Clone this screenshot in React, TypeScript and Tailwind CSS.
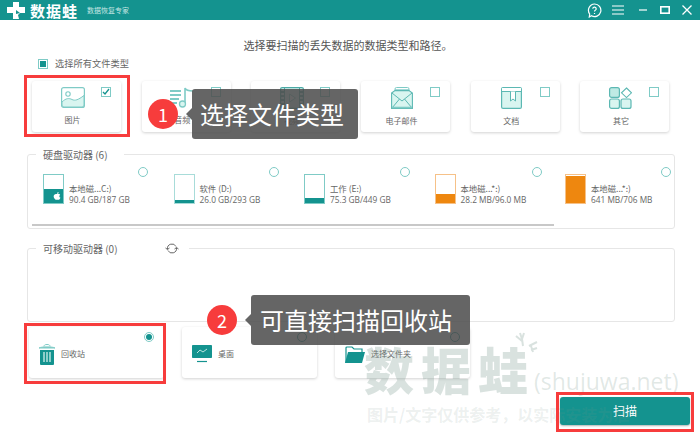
import React from "react";

const T = "#14938f";
const L = "#7fcbc6";
const F = "#d9f5f0";
const cjk = { fontFamily: '"Noto Sans CJK SC", sans-serif' };

function ImageIcon() {
  return (
    <svg width="24" height="21" viewBox="0 0 24 21" fill="none">
      <rect x="0.6" y="0.6" width="22.8" height="19.8" rx="2" fill="#fff" stroke={L} strokeWidth="1.2" />
      <path d="M1 15c4-4 7-4 10-2.5s6 .5 12-4V18a2 2 0 0 1-2 2H3a2 2 0 0 1-2-2z" fill={F} stroke={L} strokeWidth="1" />
      <circle cx="7" cy="7" r="2.2" stroke={L} strokeWidth="1.1" />
    </svg>
  );
}
function AudioIcon() {
  return (
    <svg width="24" height="21" viewBox="0 0 24 21" fill="none">
      <path d="M0 4h11M0 8h11M0 12h9M0 16h7" stroke={L} strokeWidth="1.8" />
      <path d="M15 17V1c1 3 5 3 8 3" stroke={L} strokeWidth="1.6" />
      <circle cx="12.5" cy="17" r="3" fill={F} stroke={L} strokeWidth="1.3" />
    </svg>
  );
}
function VideoIcon() {
  return (
    <svg width="24" height="22" viewBox="0 0 24 22" fill="none">
      <rect x="0.6" y="0.6" width="22.8" height="20.8" rx="1.5" fill={F} stroke="#4aa9a5" strokeWidth="1.2" />
      <path d="M4.5 1v20M19.5 1v20" stroke="#4aa9a5" strokeWidth="1" />
      <path d="M1 5h3M1 9h3M1 13h3M1 17h3M20 5h3M20 9h3M20 13h3M20 17h3" stroke="#2f8f8b" strokeWidth="1.5" />
      <path d="M9.5 7v8l6-4z" stroke={L} strokeWidth="1" fill="#fff" />
    </svg>
  );
}
function MailIcon() {
  return (
    <svg width="22" height="22" viewBox="0 0 22 22" fill="none">
      <path d="M4 4V2a1.5 1.5 0 0 1 1.5-1.5h11A1.5 1.5 0 0 1 18 2v2" stroke={L} strokeWidth="1" />
      <path d="M4 2.8h14" stroke={L} strokeWidth="1" />
      <path d="M.6 6 4 3.6h14L21.4 6v15.4H.6z" fill={F} stroke="#5cb8b3" strokeWidth="1.1" />
      <path d="m1 6 10 8 10-8M1 21l7.5-9M21 21l-7.5-9" stroke="#5cb8b3" strokeWidth="1" />
      <path d="M1 20.5h20" stroke={L} strokeWidth="1.6" />
    </svg>
  );
}
function DocIcon() {
  return (
    <svg width="21" height="22" viewBox="0 0 21 22" fill="none">
      <rect x="0.6" y="0.6" width="19.8" height="20.8" rx="1.5" fill={F} stroke="#5cb8b3" strokeWidth="1.2" />
      <path d="M1 1h19v3.5H1z" fill="#fff" />
      <path d="M1 4.5h19" stroke="#5cb8b3" strokeWidth="1" />
      <path d="M9.5 4.5V14l2.5-2 2.5 2V4.5" fill="#fff" stroke="#5cb8b3" strokeWidth="1" />
    </svg>
  );
}
function OtherIcon() {
  return (
    <svg width="23" height="22" viewBox="0 0 23 22" fill="none">
      <rect x="0.6" y="0.6" width="9.8" height="9.8" rx="2" fill="#bfeae4" stroke="#5cb8b3" strokeWidth="1.2" />
      <path d="m17.5 1 5 4.8-5 4.8-5-4.8z" fill="#fff" stroke="#5cb8b3" strokeWidth="1.1" />
      <rect x="0.6" y="12" width="9.8" height="9.4" rx="2" fill={F} stroke="#5cb8b3" strokeWidth="1.2" />
      <rect x="12" y="12" width="10" height="9.4" rx="2" fill={F} stroke="#5cb8b3" strokeWidth="1.2" />
    </svg>
  );
}

const types = [
  { n: "图片", i: <ImageIcon />, c: true },
  { n: "音频", i: <AudioIcon /> },
  { n: "视频", i: <VideoIcon /> },
  { n: "电子邮件", i: <MailIcon /> },
  { n: "文档", i: <DocIcon /> },
  { n: "其它", i: <OtherIcon /> },
];

const drives = [
  { a: "本地磁...C:)", b: "90.4 GB/187 GB", fill: 14, color: T, border: L, apple: true },
  { a: "软件 (D:)", b: "26.0 GB/293 GB", fill: 3, color: T, border: "#a8dcd9" },
  { a: "工作 (E:)", b: "75.3 GB/449 GB", fill: 5, color: T, border: L },
  { a: "本地磁...*:)", b: "28.2 MB/96.0 MB", fill: 9, color: "#ee870f", border: "#f6c188" },
  { a: "本地磁...*:)", b: "641 MB/706 MB", fill: 27, color: "#ee870f", border: "#f6c188" },
];

function Drive({ d }: { d: (typeof drives)[number] }) {
  return (
    <div className="flex h-[30px] items-center gap-[5px]">
      <div className="relative h-[30px] w-[21px] shrink-0 border" style={{ borderColor: d.border }}>
        <div className="absolute inset-x-0 bottom-0 flex items-center justify-center pl-[6px]" style={{ height: d.fill, background: d.color }}>
          {d.apple && (
            <svg width="8" height="8" viewBox="0 0 10 10" fill="#fff">
              <path d="M5 2.600C6 1.900 8 1.800 9 3.400 7.400 4.400 7.600 6.600 9.300 7.200 8.600 8.900 7.600 10 6.700 9.800 5.800 9.500 4.900 9.500 4 9.800 2.600 10 .8 7.200.8 5.300.8 3 3 1.800 5 2.600zM5 2.200C5 1 6 .2 7 0 7.100 1.200 6.200 2.200 5 2.200z" />
            </svg>
          )}
        </div>
      </div>
      <div className="mt-[10px] whitespace-nowrap text-[8.4px] leading-[12px] text-[#666]">
        <div>{d.a}</div>
        <div className="font-['Open_Sans'] text-[8.3px]">{d.b}</div>
      </div>
    </div>
  );
}

function Legend({ children, wide }: { children: React.ReactNode; wide?: boolean }) {
  return (
    <legend className={`ml-[8px] flex h-[14px] items-center whitespace-nowrap px-[7px] text-[10px] text-[#666] ${wide ? "w-[153px] gap-[47px]" : "w-[88px]"}`}>
      {children}
    </legend>
  );
}

function BottomCard({ icon, label, radio }: { icon: React.ReactNode; label: string; radio?: boolean }) {
  return (
    <div className="relative flex h-[51px] w-[135px] items-center gap-[6px] rounded-[3px] bg-white pl-[10px] pt-[3px] shadow-[0_1px_3px_rgba(0,0,0,0.18)]">
      {icon}
      <span className="text-[8px] text-[#666]">{label}</span>
      <span className={`absolute right-[10px] top-[5px] flex h-[10px] w-[10px] items-center justify-center rounded-full border ${radio ? "border-[#7fcbc6]" : "border-[#14938f]"}`}>
        {radio && <span className="h-[6px] w-[6px] rounded-full bg-[#14938f]" />}
      </span>
    </div>
  );
}

export default function App() {
  return (
    <div className="relative h-[435px] w-[700px] overflow-hidden bg-white" style={cjk}>
      <header className="flex h-5 items-center bg-[#14938f] pl-[7px] text-white">
        <svg width="18" height="17" viewBox="0 0 18 17" fill="#fff">
          <path d="M6 0h6v5h6v6h-5l-2 2 1 4H6v-6H0V5h6z" />
          <path d="m9 8 4 3-4 1z" fill="#14938f" />
        </svg>
        <span className="ml-[5px] text-[15px] font-bold leading-none tracking-[1px]">数据蛙</span>
        <span className="ml-[9px] text-[7px] leading-none text-[#c6e6e3]">数据恢复专家</span>
        <div className="ml-auto mr-[8px] flex items-center">
          <svg width="15" height="15" viewBox="0 0 15 15" fill="none" stroke="#fff" strokeWidth="1.2">
            <path d="M7.500 1a6.300 6.300 0 1 1-3 11.800L2.300 14l.4-3A6.300 6.300 0 0 1 7.500 1z" />
            <path d="M5.800 5.800a1.700 1.700 0 1 1 2.500 1.500c-.6.3-.8.700-.8 1.300M7.500 10v1" />
          </svg>
          <svg className="ml-[10px]" width="12" height="10" viewBox="0 0 12 10" stroke="#fff" strokeWidth="1.2"><path d="M0 1h12M0 5h12M0 9h12" /></svg>
          <svg className="ml-[15px]" width="8" height="2" viewBox="0 0 8 2" stroke="#fff" strokeWidth="1.2"><path d="M0 1h8" /></svg>
          <svg className="ml-[13px]" width="10" height="8" viewBox="0 0 10 8" fill="none" stroke="#fff" strokeWidth="1.600"><rect x=".8" y=".8" width="8.400" height="6.400" /></svg>
          <svg className="ml-[12px]" width="10" height="10" viewBox="0 0 10 10" stroke="#fff" strokeWidth="1.300"><path d="m.5.500 9 9M9.500.500l-9 9" /></svg>
        </div>
      </header>

      <main className="px-[27px]">
        <h1 className="mt-[17px] pr-[4px] text-center text-[11px] font-normal leading-4 text-[#555]">选择要扫描的丢失数据的数据类型和路径。</h1>

        <div className="ml-[11px] mt-[5px] flex h-3 items-center gap-[7px] text-[9.25px] text-[#666]">
          <span className="flex h-[10px] w-[10px] items-center justify-center border border-[#7fcbc6]">
            <span className="h-[6px] w-[6px] bg-[#14938f]" />
          </span>
          选择所有文件类型
        </div>

        <div className="ml-[5px] mt-[11px] flex gap-[20.7px]">
          {types.map((t) => (
            <div key={t.n} className="relative flex h-[51px] w-[89px] flex-col items-center rounded-[3px] bg-white pr-[8px] pt-[6px] shadow-[0_1px_3px_rgba(0,0,0,0.18)]">
              {t.i}
              <span className="mt-[5px] text-[8px] leading-[14px] text-[#666]">{t.n}</span>
              <span className="absolute right-[10px] top-[6px] flex h-[10px] w-[10px] items-center justify-center border border-[#7fcbc6] bg-white">
                {t.c && (
                  <svg width="8" height="8" viewBox="0 0 8 8" fill="none" stroke={T} strokeWidth="1.300"><path d="m1 4 2 2 4-5" /></svg>
                )}
              </span>
            </div>
          ))}
        </div>

        <fieldset className="relative mt-[15px] h-[82px] w-[648px] min-w-0 rounded-[3px] border border-[#e6e6e6]">
          <Legend>硬盘驱动器 (6)</Legend>
          <div className="ml-[15px] mt-[13px] grid grid-cols-[130.5px_130.5px_130.5px_130.5px_130.5px]">
            {drives.map((d) => (
              <Drive key={d.a + d.b} d={d} />
            ))}
          </div>
          <div className="absolute bottom-[2px] left-[4px] h-[2px] w-[522px] bg-[#c8c8c8]" />
          {[110, 241, 372, 503.5, 633].map((x) => (
            <span key={x} className="absolute top-[6px] h-[10px] w-[10px] rounded-full border border-[#7fcbc6]" style={{ left: x }} />
          ))}
        </fieldset>

        <fieldset className="mt-[12px] h-[81px] w-[648px] min-w-0 rounded-[3px] border border-[#e6e6e6]">
          <Legend wide>
            <span>可移动驱动器 (0)</span>
            <svg className="shrink-0" width="14" height="11" viewBox="0 0 14 11" fill="none" stroke="#555" strokeWidth="0.900">
              <path d="M2.500 6A4.500 4.500 0 0 1 11 3.500M11.500 5A4.500 4.500 0 0 1 3 7.500" />
              <path d="m0.500 5 2 1.500L4.500 5M9.500 6l2-1.500 2 1.500" />
            </svg>
          </Legend>
        </fieldset>

        <div className="ml-[2px] mt-[5px] flex gap-[18px]">
          <BottomCard
            label="回收站"
            radio
            icon={
              <svg width="16" height="21" viewBox="0 0 16 21" fill="none">
                <path d="M5 2.500C5 1 6 .5 8 .5s3 .5 3 2" stroke={L} />
                <path d="M0 4c2-1.500 14-1.500 16 0H0z" fill={L} stroke={L} />
                <path d="M1 6h14v14a1 1 0 0 1-1 1H2a1 1 0 0 1-1-1z" fill={T} />
                <path d="M5 8v10M8 8v10M11 8v10" stroke="#cfeeea" strokeWidth="1.300" />
              </svg>
            }
          />
          <BottomCard
            label="桌面"
            icon={
              <svg width="20" height="18" viewBox="0 0 20 18" fill="none">
                <rect width="20" height="13" rx="0.800" fill={T} />
                <path d="m5 8 3-3 3 2 4-3" stroke="#cfeeea" strokeWidth="0.900" />
                <path d="M5 16.500h10" stroke={T} strokeWidth="1.200" />
              </svg>
            }
          />
          <BottomCard
            label="选择文件夹"
            icon={
              <svg width="20" height="17" viewBox="0 0 20 17" fill="none">
                <path d="M1 17V2a1 1 0 0 1 1-1h5l2 2h8v3" stroke={T} strokeWidth="1.200" />
                <path d="M0 17 3 6h17l-3 11z" fill={T} />
              </svg>
            }
          />
        </div>

        <div className="mr-[-17px] mt-[19px] flex justify-end">
          <button className="h-[28px] w-[130px] rounded-[3px] bg-[#14938f] text-[12px] text-white shadow-[0_1px_2px_rgba(0,0,0,0.3)]">扫描</button>
        </div>
      </main>

      {/* watermark */}
      <div className="pointer-events-none absolute left-[364px] top-[340px] w-[330px]">
        <svg className="absolute left-[151px] top-[-8px]" width="24" height="22" viewBox="0 0 24 22" fill="none" stroke="rgba(120,150,140,0.28)" strokeWidth="2">
          <path d="M5 1l2 6 2-6M7 7l1 7M1 4l6 5" />
          <path d="M14 14l8-4M16 18l6-2M16 14l2 6" />
        </svg>
        <div className="flex items-end">
          <span className="text-[50px] font-black leading-[56px] tracking-[7px] text-[rgba(120,150,140,0.28)]">数据蛙</span>
          <span className="ml-[-1px] font-['Open_Sans'] text-[23px] leading-[30px] text-[rgba(120,150,140,0.22)]">(shujuwa.net)</span>
        </div>
        <div className="ml-[3px] mt-[8px] whitespace-nowrap text-[16px] font-bold leading-[20px] text-[rgba(120,150,140,0.14)]">图片/文字仅供参考，以实际安装为准</div>
      </div>

      {/* red highlight frames */}
      <div className="absolute left-[24px] top-[75px] h-[62px] w-[106px] border-[3px] border-[#f73c3c]" />
      <div className="absolute left-[24px] top-[323px] h-[61px] w-[142px] border-[3px] border-[#f73c3c]" />
      <div className="absolute left-[556px] top-[392px] h-[40px] w-[138px] border-[3px] border-[#f73c3c]" />

      {/* callouts */}
      <div className="absolute left-[148px] top-[89px] flex items-center">
        <span className="z-10 flex h-[30px] w-[30px] items-center justify-center rounded-full bg-[#f73c3c] text-[18px] text-white">1</span>
        <span className="ml-[8px] h-0 w-0 border-y-[6px] border-r-[6px] border-y-transparent border-r-[rgba(80,80,80,0.88)]" />
        <span className="flex h-[50px] w-[166px] items-center rounded-[3px] bg-[rgba(80,80,80,0.88)] pl-[8px] text-[24px] text-white">选择文件类型</span>
      </div>
      <div className="absolute left-[207px] top-[295px] flex items-center">
        <span className="z-10 flex h-[30px] w-[30px] items-center justify-center rounded-full bg-[#f73c3c] text-[18px] text-white">2</span>
        <span className="ml-[8px] h-0 w-0 border-y-[6px] border-r-[6px] border-y-transparent border-r-[rgba(80,80,80,0.88)]" />
        <span className="flex h-[50px] w-[219px] items-center rounded-[3px] bg-[rgba(80,80,80,0.88)] pl-[9px] text-[24px] text-white">可直接扫描回收站</span>
      </div>
    </div>
  );
}
